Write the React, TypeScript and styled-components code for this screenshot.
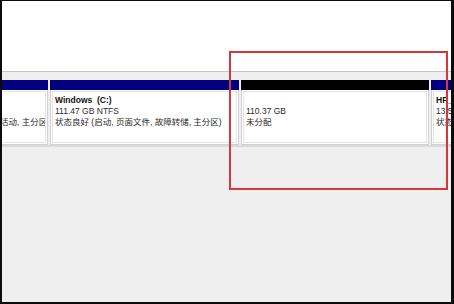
import styled, { createGlobalStyle } from 'styled-components'

const GlobalStyle = createGlobalStyle`
	html, body {
		margin: 0;
		padding: 0;
		background: #000;
	}
	#root {
		width: 454px;
		height: 304px;
	}
`

type Part = {
	id: string
	color: string
	width: number
	shift?: number
	lines: string[]
}

const parts: Part[] = [
	{
		id: 'sys',
		color: '#000080',
		width: 114,
		shift: -68,
		lines: ['系统保留', '350 MB NTFS', '状态良好 (系统, 活动, 主分区)'],
	},
	{
		id: 'c',
		color: '#000080',
		width: 189,
		lines: ['Windows  (C:)', '111.47 GB NTFS', '状态良好 (启动, 页面文件, 故障转储, 主分区)'],
	},
	{
		id: 'free',
		color: '#000000',
		width: 188,
		lines: ['', '110.37 GB', '未分配'],
	},
	{
		id: 'hp',
		color: '#000080',
		width: 120,
		lines: ['HP_RECOVERY (D:)', '13.56 GB NTFS', '状态良好 (主分区)'],
	},
]

const App = () => {
	return (
		<>
			<GlobalStyle />
			<Frame>
				<Screen>
					<TopPane />
					<DiskStrip>
						<PartitionRow>
							{parts.map((p) => (
								<Partition key={p.id} $width={p.width} $shift={p.shift ?? 0}>
									<Bar $color={p.color} />
									<Body>
										<Inner>
											{p.lines.map((line, i) => (
												<Line key={i} $bold={i === 0}>
													{line || '\u00a0'}
												</Line>
											))}
										</Inner>
									</Body>
								</Partition>
							))}
						</PartitionRow>
					</DiskStrip>
					<Rest />
					<Highlight />
				</Screen>
			</Frame>
		</>
	)
}

export default App

const Frame = styled.div`
	box-sizing: border-box;
	width: 454px;
	height: 304px;
	border-style: solid;
	border-color: #0c0c0c;
	border-width: 1px 3px 2px 2px;
	display: flex;
`

const Screen = styled.div`
	position: relative;
	flex: 1;
	min-width: 0;
	display: flex;
	flex-direction: column;
	overflow: hidden;
	background: #f0eff0;
	font-family: 'Liberation Sans', 'Noto Sans CJK SC', sans-serif;
`

const TopPane = styled.div`
	height: 70px;
	flex-shrink: 0;
	background: #ffffff;
	border-bottom: 1px solid #c4c4c4;
`

const DiskStrip = styled.div`
	flex-shrink: 0;
	padding-top: 8px;
	background: #efefef;
	border-bottom: 2px solid #d9d9d9;
`

const PartitionRow = styled.div`
	display: flex;
	gap: 2px;
`

const Partition = styled.div<{ $width: number; $shift: number }>`
	flex: 0 0 ${(p) => p.$width}px;
	width: ${(p) => p.$width}px;
	min-width: 0;
	margin-left: ${(p) => p.$shift}px;
	display: flex;
	flex-direction: column;
`

const Bar = styled.div<{ $color: string }>`
	height: 10px;
	background: ${(p) => p.$color};
`

const Body = styled.div`
	box-sizing: border-box;
	height: 55px;
	padding: 1px;
	background: #ffffff;
	border: 1px solid #d2d2d2;
	border-top: none;
`

const Inner = styled.div`
	box-sizing: border-box;
	height: 100%;
	padding: 3px 0 0 2px;
	border: 1px solid #e3e3e3;
	overflow: hidden;
	display: flex;
	flex-direction: column;
`

const Line = styled.div<{ $bold: boolean }>`
	font-size: 8.5px;
	line-height: 11px;
	white-space: pre;
	color: ${(p) => (p.$bold ? '#111' : '#2a2a2a')};
	font-weight: ${(p) => (p.$bold ? 700 : 400)};
`

const Rest = styled.div`
	flex: 1;
	background: #f0eff0;
`

const Highlight = styled.div`
	position: absolute;
	left: 227px;
	top: 50px;
	width: 219px;
	height: 139px;
	box-sizing: border-box;
	border: 2px solid #d23a3a;
`
